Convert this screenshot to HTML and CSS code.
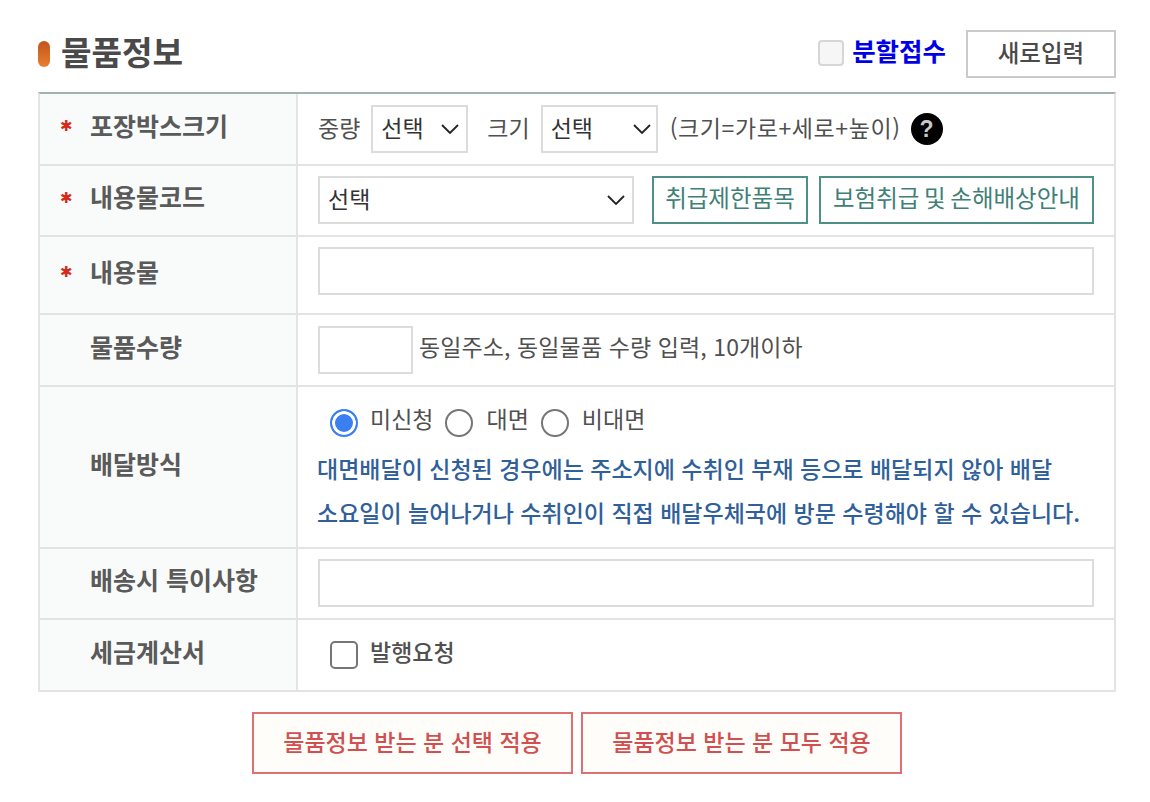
FILE: index.html
```html
<!DOCTYPE html>
<html lang="ko">
<head>
<meta charset="utf-8">
<title>물품정보</title>
<link rel="stylesheet" href="styles.css">
</head>
<body>
<main class="page">
  <header class="head">
    <h2 class="title"><span class="bullet"></span>물품정보</h2>
    <div class="head-right">
      <span class="check check-disabled"></span>
      <span class="split">분할접수</span>
      <button class="btn-new">새로입력</button>
    </div>
  </header>
  <section class="form">
    <div class="row r1">
      <div class="label"><span class="star">✱</span>포장박스크기</div>
      <div class="field">
        <span class="txt">중량</span>
        <span class="select s-weight">선택<svg class="chev" viewBox="0 0 18 10"><path d="M1 1l8 8 8-8"/></svg></span>
        <span class="txt t-size">크기</span>
        <span class="select s-size">선택<svg class="chev" viewBox="0 0 18 10"><path d="M1 1l8 8 8-8"/></svg></span>
        <span class="txt t-hint">(크기=가로+세로+높이)</span>
        <span class="help">?</span>
      </div>
    </div>
    <div class="row r2">
      <div class="label"><span class="star">✱</span>내용물코드</div>
      <div class="field">
        <span class="select s-code">선택<svg class="chev" viewBox="0 0 18 10"><path d="M1 1l8 8 8-8"/></svg></span>
        <button class="btn-green b-limit">취급제한품목</button>
        <button class="btn-green b-ins">보험취급 및 손해배상안내</button>
      </div>
    </div>
    <div class="row r3">
      <div class="label"><span class="star">✱</span>내용물</div>
      <div class="field"><span class="input wide"></span></div>
    </div>
    <div class="row r4">
      <div class="label"><span class="star none"></span>물품수량</div>
      <div class="field">
        <span class="input qty"></span>
        <span class="txt t-qty">동일주소, 동일물품 수량 입력, 10개이하</span>
      </div>
    </div>
    <div class="row r5">
      <div class="label"><span class="star none"></span>배달방식</div>
      <div class="field column">
        <div class="radios">
          <span class="radio on"></span><span class="txt rt1">미신청</span>
          <span class="radio"></span><span class="txt rt2">대면</span>
          <span class="radio"></span><span class="txt rt2">비대면</span>
        </div>
        <p class="note">대면배달이 신청된 경우에는 주소지에 수취인 부재 등으로 배달되지 않아 배달<br>소요일이 늘어나거나 수취인이 직접 배달우체국에 방문 수령해야 할 수 있습니다.</p>
      </div>
    </div>
    <div class="row r6">
      <div class="label"><span class="star none"></span>배송시 특이사항</div>
      <div class="field"><span class="input wide"></span></div>
    </div>
    <div class="row r7">
      <div class="label"><span class="star none"></span>세금계산서</div>
      <div class="field">
        <span class="check check-plain"></span>
        <span class="txt t-tax">발행요청</span>
      </div>
    </div>
  </section>
  <div class="actions">
    <button class="btn-red">물품정보 받는 분 선택 적용</button>
    <button class="btn-red">물품정보 받는 분 모두 적용</button>
  </div>
</main>
</body>
</html>
```
FILE: styles.css
```css
* { box-sizing: border-box; }
html, body { margin: 0; padding: 0; background: #fff; }
body {
  width: 1150px;
  height: 802px;
  overflow: hidden;
  font-family: "Noto Sans CJK KR", "Noto Sans", sans-serif;
  color: #505050;
  font-size: 23px;
}
.page { padding: 0 34px 0 38px; }
button { font-family: inherit; cursor: pointer; padding: 0; }

.head {
  height: 92px;
  display: flex;
  align-items: flex-start;
  justify-content: space-between;
  padding-top: 30px;
}
.title {
  margin: 0;
  display: flex;
  align-items: center;
  height: 40px;
  font-size: 33.2px;
  font-weight: 700;
  color: #4a4a4a;
}
.bullet {
  width: 12px;
  height: 26px;
  margin: 8px 11px 0 0;
  border-radius: 6px;
  background: linear-gradient(#c2541c, #e8802f);
}
.head-right { display: flex; align-items: flex-start; }
.check {
  display: block;
  width: 26px;
  height: 26px;
  border-radius: 4px;
}
.check-disabled {
  margin: 10px 8px 0 0;
  border: 2px solid #d6d6d6;
  background: #f6f6f6;
}
.split {
  font-size: 25.5px;
  font-weight: 700;
  line-height: 40px;
  color: #0000e6;
  margin-right: 20px;
}
.btn-new {
  width: 150px;
  height: 48px;
  padding-bottom: 4px;
  border: 2px solid #cacaca;
  background: #fff;
  color: #4a4a4a;
  font-size: 23.5px;
  font-weight: 500;
}

.form {
  border-top: 2px solid #a0b3af;
  border-left: 2px solid #e3e3e3;
  border-right: 2px solid #e3e3e3;
}
.row { display: flex; border-bottom: 2px solid #e3e3e3; }
.r1 { height: 72px; }
.r2 { height: 71px; }
.r3 { height: 78px; }
.r4 { height: 72px; }
.r5 { height: 162px; }
.r6 { height: 71px; }
.r7 { height: 72px; }
.label {
  width: 258px;
  flex: none;
  display: flex;
  align-items: center;
  padding: 0 0 9px 20px;
  background: #f9fbfa;
  border-right: 2px solid #e3e3e3;
  font-size: 25px;
  font-weight: 700;
  color: #5a5a5a;
}
.star {
  width: 30px;
  flex: none;
  color: #d42a1c;
  font-family: "DejaVu Sans", sans-serif;
  font-size: 15px;
  font-weight: 700;
  line-height: 1;
  padding: 4px 0 0;
}
.field {
  flex: 1;
  display: flex;
  align-items: center;
  padding: 0 20px;
  min-width: 0;
}
.r2 .field { padding-bottom: 2px; }
.r3 .field { padding-bottom: 8px; }
.r6 .field { padding-bottom: 1px; }
.txt { white-space: nowrap; position: relative; top: -2px; }
.r4 .txt, .r7 .txt, .radios .txt { top: -4px; }
.select {
  display: flex;
  align-items: center;
  justify-content: space-between;
  height: 48px;
  padding: 0 7px 4px 8px;
  border: 2px solid #dcdcdc;
  background: #fff;
  color: #333;
  font-size: 23px;
}
.chev {
  width: 18px;
  height: 10px;
  margin-top: 4px;
  fill: none;
  stroke: #222;
  stroke-width: 1.8;
}
.s-weight { width: 97px; margin-left: 11px; }
.t-size { margin-left: 19px; }
.s-size { width: 117px; margin-left: 11px; }
.s-size .chev { margin-right: -2px; }
.t-hint { margin-left: 12px; letter-spacing: .6px; }
.help {
  width: 32px;
  height: 32px;
  margin-left: 10px;
  border-radius: 50%;
  background: #000;
  color: #c8c8c8;
  font: 700 23px/32px "Liberation Sans", sans-serif;
  text-align: center;
}
.s-code { width: 316px; }
.btn-green {
  height: 48px;
  padding: 0 0 5px;
  border: 2px solid #4e9088;
  background: #fff;
  color: #3f8077;
  font-size: 23.5px;
  white-space: nowrap;
}
.b-limit { width: 156px; margin: 0 11px 0 18px; }
.b-ins { width: 275px; word-spacing: -2px; }
.input {
  display: block;
  height: 48px;
  border: 2px solid #dcdcdc;
  background: #fff;
}
.wide { width: 100%; }
.qty { width: 95px; flex: none; }
.t-qty { margin-left: 6px; letter-spacing: .1px; }
.column { flex-direction: column; align-items: flex-start; padding-top: 14px; }
.radios { display: flex; align-items: center; height: 42px; padding-left: 12px; }
.radio {
  display: block;
  width: 28px;
  height: 28px;
  margin-top: 2px;
  border: 2px solid #767676;
  border-radius: 50%;
  background: #fff;
}
.radio.on {
  border-color: #3b7ef0;
  background: #3b7ef0;
  box-shadow: inset 0 0 0 3px #fff;
}
.rt1 { margin: 0 12px 0 12px; }
.rt2 { margin: 0 12px 0 13px; }
.note {
  margin: 3px 0 0 -1px;
  font-size: 23px;
  font-weight: 500;
  line-height: 44px;
  color: #2f6099;
  white-space: nowrap;
}
.check-plain {
  width: 28px;
  height: 28px;
  margin-left: 12px;
  border: 2px solid #767676;
  border-radius: 5px;
  background: #fff;
}
.t-tax { margin-left: 12px; font-weight: 500; }
.actions { display: flex; justify-content: center; gap: 8px; padding-top: 20px; }
.btn-red {
  width: 321px;
  height: 62px;
  padding-bottom: 5px;
  border: 2px solid #dd7070;
  background: #fffdf9;
  color: #d24f4f;
  font-size: 23px;
  font-weight: 500;
}
```
